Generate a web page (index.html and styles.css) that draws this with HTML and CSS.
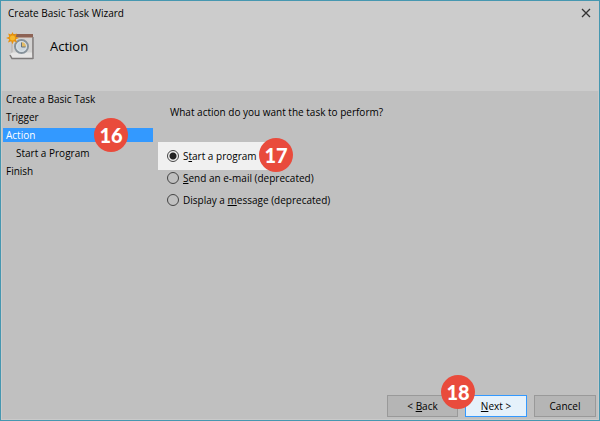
FILE: index.html
```
<!DOCTYPE html>
<html lang="en">

<head>
    <meta charset="UTF-8">
    <meta name="viewport" content="width=device-width, initial-scale=1.0">
    <title>Create Basic Task Wizard</title>
    <link rel="stylesheet" href="styles.css">
</head>

<body>
    <form class="wizard">
        <header class="header">
            <div class="title-bar">
                <span>Create Basic Task Wizard</span>
                <button type="button" class="close-btn" aria-label="Close">
                    <svg width="10" height="10" viewBox="0 0 10 10">
                        <path d="M1 1l8 8M9 1l-8 8" stroke="#333" stroke-width="1.3" />
                    </svg>
                </button>
            </div>
            <div class="heading">
                <svg width="28" height="28" viewBox="0 0 28 28">
                    <path d="M6 4h20.500v20H6z" fill="#d3d2d1" stroke="#b3aeac" />
                    <path d="M5 2h22v4H5z" fill="#8d6355" />
                    <path d="M6 5.500h21" stroke="#b79a8d" />
                    <path d="M4 22l2-1.500h20l1 6H5.500z" fill="#e6e5e4" />
                    <path d="M4 23l2 3.500h21" fill="none" stroke="#7d7a79" stroke-width="1.5" />
                    <path d="M27 5v22" stroke="#858180" stroke-width="1.500" />
                    <circle cx="15.500" cy="14.500" r="6.500" fill="#cbd5dc" stroke="#87929a" stroke-width="2" />
                    <circle cx="15.500" cy="14.500" r="4.800" fill="none" stroke="#dde4e8" />
                    <path d="M15.500 10v5h4.500a5 5 0 0 0-4.500-5z" fill="#e2bb66" />
                    <path d="M15.500 10.500v4.500h4" fill="none" stroke="#66747e" />
                    <path d="M6.500 0l1.200 2.600L10.800 1.600 9.800 4.700 13 6l-3.200 1.300 1.200 3.200-3.200-1.200-1.300 3-1.300-3-3.200 1.200 1.200-3.200L0 6l3.200-1.300-1-3.100 3.100 1z" fill="#e8930f" />
                    <circle cx="6.500" cy="6" r="2.500" fill="#f6b92c" />
                </svg>
                <h1>Action</h1>
            </div>
        </header>

        <main class="content">
            <ol class="steps">
                <li>Create a Basic Task</li>
                <li>Trigger</li>
                <li class="current">Action<span class="badge">16</span></li>
                <li class="sub-step">Start a Program</li>
                <li>Finish</li>
            </ol>
            <fieldset class="options">
                <legend>What action do you want the task to perform?</legend>
                <label class="option selected">
                    <input type="radio" name="action" checked>
                    <span>S<u>t</u>art a program</span>
                    <span class="badge">17</span>
                </label>
                <label class="option">
                    <input type="radio" name="action">
                    <span><u>S</u>end an e-mail (deprecated)</span>
                </label>
                <label class="option">
                    <input type="radio" name="action">
                    <span>Display a <u>m</u>essage (deprecated)</span>
                </label>
            </fieldset>
        </main>

        <footer class="footer">
            <button type="button" class="btn back-btn">&lt; <u>B</u>ack</button>
            <button type="button" class="btn next-btn"><u>N</u>ext &gt;<span class="badge">18</span></button>
            <button type="button" class="btn">Cancel</button>
        </footer>
    </form>
</body>

</html>
```
FILE: styles.css
```
* {
    box-sizing: border-box;
}

body {
    margin: 0;
    font-family: "Open Sans", "Noto Sans", sans-serif;
    font-size: 10px;
    color: #000;
}

.wizard {
    display: flex;
    flex-direction: column;
    min-height: 100vh;
    border: 1px solid #4697b0;
    background-color: #c0c0c0;
    box-shadow: inset 0 0 0 1px #cacaca;
}

.header {
    height: 90px;
    background-color: #cccccc;
}

.title-bar {
    display: flex;
    justify-content: space-between;
    align-items: center;
    height: 24px;
    padding: 0 8px 0 7px;
}

.close-btn {
    display: flex;
    padding: 0;
    border: none;
    background: none;
}

.heading {
    display: flex;
    align-items: center;
    gap: 16px;
    padding: 7px 5px;
}

.heading h1 {
    margin: 0;
    font-size: 13px;
    font-weight: normal;
}

.content {
    display: flex;
    flex: 1;
    padding-top: 1px;
}

.steps {
    width: 150px;
    margin: 0 0 0 2px;
    padding: 0;
    list-style: none;
}

.steps li {
    position: relative;
    margin-bottom: 4px;
    padding-left: 3px;
    line-height: 14px;
}

.steps .current {
    background-color: #3399ff;
    color: white;
}

.steps .sub-step {
    padding-left: 13px;
}

.badge {
    position: absolute;
    width: 34px;
    height: 34px;
    border-radius: 50%;
    background-color: #e94b3c;
    color: white;
    font-family: Lato, sans-serif;
    font-size: 20px;
    font-weight: 900;
    line-height: 34px;
    text-align: center;
}

.current .badge {
    top: -10px;
    right: 25px;
}

.options {
    flex: 1;
    margin: 0;
    padding: 12px 5px;
    border: none;
}

.options legend {
    float: left;
    width: 100%;
    margin-bottom: 22px;
    padding: 0 12px;
    line-height: 16px;
}

.option {
    display: flex;
    clear: both;
    align-items: center;
    gap: 4px;
    height: 22px;
    padding-left: 9px;
}

.option.selected {
    position: relative;
    width: 118px;
    height: 28px;
    margin-bottom: -3px;
    background-color: #f0f0f0;
}

.option input {
    appearance: none;
    width: 12px;
    height: 12px;
    margin: 0;
    border: 1px solid #444;
    border-radius: 50%;
}

.option input:checked {
    background: radial-gradient(circle, #222 3px, transparent 4px);
}

.selected .badge {
    top: -4px;
    right: -17px;
}

.footer {
    display: flex;
    justify-content: flex-end;
    gap: 7px;
    padding: 0 3px 3px;
}

.btn {
    width: 62px;
    height: 22px;
    padding: 0;
    border: 1px solid #999;
    background-color: #b5b5b5;
    color: #000;
    font-family: inherit;
    font-size: 10px;
}

.back-btn {
    width: 71px;
}

.next-btn {
    position: relative;
    border-color: #3399ff;
    background-color: #e5f1fb;
}

.next-btn .badge {
    top: -21px;
    left: -25px;
}
```
